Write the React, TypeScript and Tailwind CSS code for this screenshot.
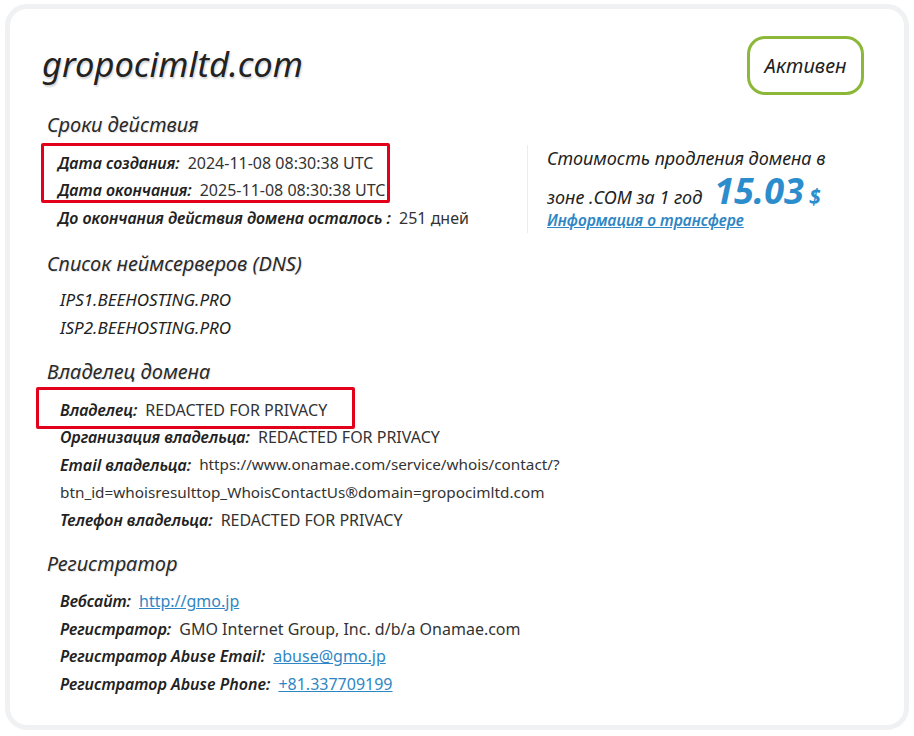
const LABEL = 'text-[16px] italic font-semibold text-[#222]'
const VALUE = "font-['Noto_Sans',sans-serif] text-[16px] text-[#333]"
const URL_VALUE = "font-['Noto_Sans',sans-serif] text-[15.3px] text-[#333]"
const LINK = "font-['Noto_Sans',sans-serif] text-[16px] text-[#2f86c4] underline"
const HEAD =
  "text-[20px] italic leading-[30px] text-[#2a2a2a] [text-shadow:1px_1px_1px_rgba(0,0,0,0.12)]"

function Row({ label, children }: { label: string; children: React.ReactNode }) {
  return (
    <div className="flex h-[27.5px] items-center gap-[8px] whitespace-nowrap">
      <span className={LABEL}>{label}</span>
      {children}
    </div>
  )
}

export default function App() {
  return (
    <div className="min-h-screen bg-white pl-[5px] pt-[4px] font-['Noto_Sans',sans-serif] text-[15px]">
      <div className="relative h-[726px] w-[904px] rounded-[22px] border-[5px] border-[#eff1f2] bg-white pl-[32px] pr-[40px] pt-[26px]">
        {/* header */}
        <div className="flex items-start justify-between">
          <h1 className="mt-[7px] text-[34.5px] italic font-normal leading-[44px] text-[#222] [text-shadow:1px_2px_2px_rgba(0,0,0,0.18)]">
            gropocimltd.com
          </h1>
          <div className="mt-[1px] flex h-[59px] w-[117px] items-center justify-center rounded-[18px] border-[3px] border-[#8cb83a] text-[20px] italic text-[#222]">
            Активен
          </div>
        </div>

        {/* validity */}
        <div className="mt-[15px] flex">
          <div className="relative w-[485px] pl-[5px]">
            <h2 className={HEAD}>Сроки действия</h2>
            <div className="pointer-events-none absolute left-[-1px] top-[33px] h-[60px] w-[349px] rounded-[2px] border-[3px] border-[#e3001b]" />
            <div className="mt-[9px] pl-[11px]">
              <Row label="Дата создания:">
                <span className={VALUE}>2024-11-08 08:30:38 UTC</span>
              </Row>
              <Row label="Дата окончания:">
                <span className={VALUE}>2025-11-08 08:30:38 UTC</span>
              </Row>
              <Row label="До окончания действия домена осталось :">
                <span className={VALUE}>251 дней</span>
              </Row>
            </div>
          </div>
          <div className="mt-[35px] flex h-[88px] flex-col border-l border-[#ececec] pl-[19px]">
            <div className="text-[18px] italic leading-[26px] text-[#222]">Стоимость продления домена в</div>
            <div className="flex h-[38px] items-baseline pt-[2px] text-[18px] italic leading-[36px] text-[#222]">
              зоне .COM за 1 год
              <span className="ml-[12px] text-[36px] font-bold text-[#2b8dcc]">15.03</span>
              <span className="ml-[5px] text-[21px] font-bold text-[#2b8dcc]">$</span>
            </div>
            <a className="text-[15.5px] font-semibold italic leading-[22px] text-[#2f86c4] underline">
              Информация о трансфере
            </a>
          </div>
        </div>

        {/* dns */}
        <div className="mt-[16px] pl-[5px]">
          <h2 className={HEAD}>Список неймсерверов (DNS)</h2>
          <div className="mt-[7px] pl-[13px] text-[17px] italic leading-[27.5px] text-[#222]">
            <div>IPS1.BEEHOSTING.PRO</div>
            <div>ISP2.BEEHOSTING.PRO</div>
          </div>
        </div>

        {/* owner */}
        <div className="relative mt-[16px] pl-[5px]">
          <h2 className={HEAD}>Владелец домена</h2>
          <div className="pointer-events-none absolute left-[-6px] top-[30px] h-[42px] w-[319px] rounded-[2px] border-[3px] border-[#e3001b]" />
          <div className="mt-[9px] pl-[13px]">
            <Row label="Владелец:">
              <span className={VALUE}>REDACTED FOR PRIVACY</span>
            </Row>
            <Row label="Организация владельца:">
              <span className={VALUE}>REDACTED FOR PRIVACY</span>
            </Row>
            <Row label="Email владельца:">
              <span className={URL_VALUE}>https://www.onamae.com/service/whois/contact/?</span>
            </Row>
            <div className={`${URL_VALUE} flex h-[27.5px] items-center`}>
              btn_id=whoisresulttop_WhoisContactUs®domain=gropocimltd.com
            </div>
            <Row label="Телефон владельца:">
              <span className={VALUE}>REDACTED FOR PRIVACY</span>
            </Row>
          </div>
        </div>

        {/* registrar */}
        <div className="mt-[15px] pl-[5px]">
          <h2 className={HEAD}>Регистратор</h2>
          <div className="mt-[9px] pl-[13px]">
            <Row label="Вебсайт:">
              <a className={LINK}>http://gmo.jp</a>
            </Row>
            <Row label="Регистратор:">
              <span className={VALUE}>GMO Internet Group, Inc. d/b/a Onamae.com</span>
            </Row>
            <Row label="Регистратор Abuse Email:">
              <a className={LINK}>abuse@gmo.jp</a>
            </Row>
            <Row label="Регистратор Abuse Phone:">
              <a className={LINK}>+81.337709199</a>
            </Row>
          </div>
        </div>
      </div>
    </div>
  )
}
